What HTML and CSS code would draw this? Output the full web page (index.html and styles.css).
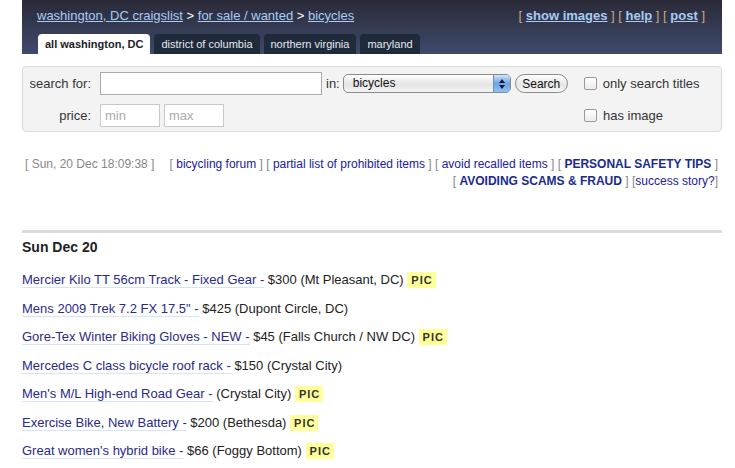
FILE: index.html
```html
<!DOCTYPE html>
<html>
<head>
<meta charset="utf-8">
<link rel="stylesheet" href="styles.css">
</head>
<body>
<div class="page">
  <header class="bchead">
    <div class="toprow">
      <div class="crumbs"><a href="#">washington, DC craigslist</a> &gt; <a href="#">for sale / wanted</a> &gt; <a href="#">bicycles</a></div>
      <div class="toplinks">[ <a href="#">show images</a> ] [ <a href="#">help</a> ] [ <a href="#">post</a> ]</div>
    </div>
    <nav class="tabs">
      <span class="tab active">all washington, DC</span>
      <span class="tab">district of columbia</span>
      <span class="tab">northern virginia</span>
      <span class="tab">maryland</span>
    </nav>
  </header>

  <form class="searchbox">
    <div class="srow">
      <label class="lbl">search for:</label>
      <input class="query" type="text">
      <span class="inlbl">in:</span>
      <span class="selwrap">
        <span class="seltext">bicycles</span>
        <span class="selarrow"><svg width="8" height="12" viewBox="0 0 8 12"><path d="M4 1 L7 5 L1 5 Z M4 11 L7 7 L1 7 Z" fill="#1a1a2a"/></svg></span>
      </span>
      <button class="btn" type="button">Search</button>
      <label class="chk"><span class="box"></span>only search titles</label>
    </div>
    <div class="srow row2">
      <label class="lbl">price:</label>
      <input class="price" type="text" placeholder="min">
      <input class="price" type="text" placeholder="max">
      <span class="spacer"></span>
      <label class="chk"><span class="box"></span>has image</label>
    </div>
  </form>

  <div class="infobar">
    <div class="date">[ Sun, 20 Dec 18:09:38 ]</div>
    <div class="links">
      <div>[ <a href="#">bicycling forum</a> ] [ <a href="#">partial list of prohibited items</a> ] [ <a href="#">avoid recalled items</a> ] [ <a class="strong" href="#">PERSONAL SAFETY TIPS</a> ]</div>
      <div>[ <a class="strong" href="#">AVOIDING SCAMS &amp; FRAUD</a> ] [<a href="#">success story?</a>]</div>
    </div>
  </div>

  <hr class="rule">

  <h4 class="day">Sun Dec 20</h4>
  <ul class="listing">
    <li><a href="#">Mercier Kilo TT 56cm Track - Fixed Gear -</a> $300 (Mt Pleasant, DC) <span class="pic">PIC</span></li>
    <li><a href="#">Mens 2009 Trek 7.2 FX 17.5" -</a> $425 (Dupont Circle, DC)</li>
    <li><a href="#">Gore-Tex Winter Biking Gloves - NEW -</a> $45 (Falls Church / NW DC) <span class="pic">PIC</span></li>
    <li><a href="#">Mercedes C class bicycle roof rack -</a> $150 (Crystal City)</li>
    <li><a href="#">Men's M/L High-end Road Gear -</a> (Crystal City) <span class="pic">PIC</span></li>
    <li><a href="#">Exercise Bike, New Battery -</a> $200 (Bethesda) <span class="pic">PIC</span></li>
    <li><a href="#">Great women's hybrid bike -</a> $66 (Foggy Bottom) <span class="pic">PIC</span></li>
  </ul>
</div>
</body>
</html>
```

FILE: styles.css
```css
html, body {
  margin: 0;
  padding: 0;
  background: #fff;
}
body {
  font-family: "Liberation Sans", Arial, sans-serif;
  font-size: 13px;
  color: #222;
}
.page {
  width: 700px;
  margin-left: 22px;
}
.bchead {
  background: linear-gradient(#2a2a38, #3f4a6c);
  height: 54px;
  padding: 0 15px;
  box-sizing: border-box;
  display: flex;
  flex-direction: column;
}
.toprow {
  display: flex;
  justify-content: space-between;
  align-items: baseline;
  padding-top: 8px;
  height: 26px;
  box-sizing: border-box;
}
.crumbs {
  color: #fff;
  font-size: 13px;
}
.crumbs a {
  color: #a9ccf2;
}
.toplinks {
  color: #c9a87c;
  font-size: 13px;
  margin-right: 2px;
}
.toplinks a {
  color: #a9ccf2;
  font-weight: bold;
}
.tabs {
  display: flex;
  gap: 4px;
  margin-top: 8px;
  padding-left: 1px;
}
.tab {
  height: 20px;
  line-height: 20px;
  padding: 0 7px;
  font-size: 11px;
  background: #1f2a3b;
  color: #e4e8f0;
  border-radius: 4px 4px 0 0;
}
.tab.active {
  background: #fff;
  color: #222;
  font-weight: bold;
}
.searchbox {
  margin: 12px 0 0;
  height: 66px;
  box-sizing: border-box;
  background: #f3f3f3;
  border: 1px solid #dcdcdc;
  border-radius: 4px;
  padding: 5px 0 0 0;
}
.srow {
  display: flex;
  align-items: center;
  height: 23px;
}
.row2 {
  margin-top: 9px;
}
.lbl {
  width: 68px;
  text-align: right;
  margin-right: 9px;
  color: #333;
}
.query {
  width: 222px;
  height: 23px;
  box-sizing: border-box;
  border: 1px solid #aaa;
  background: #fff;
  margin: 0;
}
.inlbl {
  margin-left: 4px;
  margin-right: 3px;
  color: #333;
}
.selwrap {
  display: flex;
  width: 168px;
  height: 19px;
  box-sizing: border-box;
  border: 1px solid #8a8a8a;
  border-radius: 5px;
  background: linear-gradient(#ffffff, #e4e4e4 55%, #f4f4f4);
  overflow: hidden;
}
.seltext {
  flex: 1;
  font-size: 12px;
  line-height: 17px;
  padding-left: 9px;
  color: #111;
}
.selarrow {
  width: 16px;
  display: flex;
  align-items: center;
  justify-content: center;
  background: linear-gradient(#cfe3fb, #6aa3e8 50%, #8fc0f5);
  border-left: 1px solid #6d8fb8;
}
.btn {
  margin-left: 4px;
  height: 19px;
  width: 53px;
  padding: 0;
  border: 1px solid #8a8a8a;
  border-radius: 10px;
  background: linear-gradient(#ffffff, #e6e6e6 55%, #f6f6f6);
  font-family: "Liberation Sans", Arial, sans-serif;
  font-size: 12px;
  color: #111;
}
.chk {
  display: flex;
  align-items: center;
  margin-left: 16px;
  color: #333;
}
.box {
  width: 11px;
  height: 11px;
  border: 1px solid #9a9a9a;
  border-radius: 2px;
  background: linear-gradient(#ffffff, #ececec);
  margin-right: 6px;
}
.price {
  width: 60px;
  height: 23px;
  box-sizing: border-box;
  border: 1px solid #c8c8c8;
  background: #fff;
  margin: 0 4px 0 0;
  font-family: "Liberation Sans", Arial, sans-serif;
  font-size: 13px;
  padding: 2px 4px;
}
.price::placeholder {
  color: #aaa;
}
.spacer {
  width: 340px;
}
.infobar {
  display: flex;
  justify-content: space-between;
  margin-top: 24px;
  padding: 0 4px 0 3px;
  font-size: 12px;
  line-height: 17px;
}
.date {
  color: #888;
}
.links {
  text-align: right;
  color: #888;
}
.links a {
  color: #2020a0;
  text-decoration: none;
}
.links a.strong {
  font-weight: bold;
  color: #1a2a90;
}
.rule {
  margin: 40px 0 0;
  border: 0;
  height: 3px;
  background: #dcdcdc;
}
.day {
  margin: 6px 0 0;
  font-size: 14px;
  font-weight: bold;
  color: #222;
}
.listing {
  list-style: none;
  margin: 14px 0 0;
  padding: 0;
}
.listing li {
  height: 28.5px;
  line-height: 22px;
  font-size: 13px;
  color: #222;
}
.listing a {
  color: #2a2a8a;
  text-decoration: none;
  border-bottom: 1px solid #d6e4f8;
}
.pic {
  background: #ffff99;
  font-size: 11px;
  font-weight: bold;
  letter-spacing: 1px;
  padding: 2px 3px 2px 4px;
  color: #333;
}
```
